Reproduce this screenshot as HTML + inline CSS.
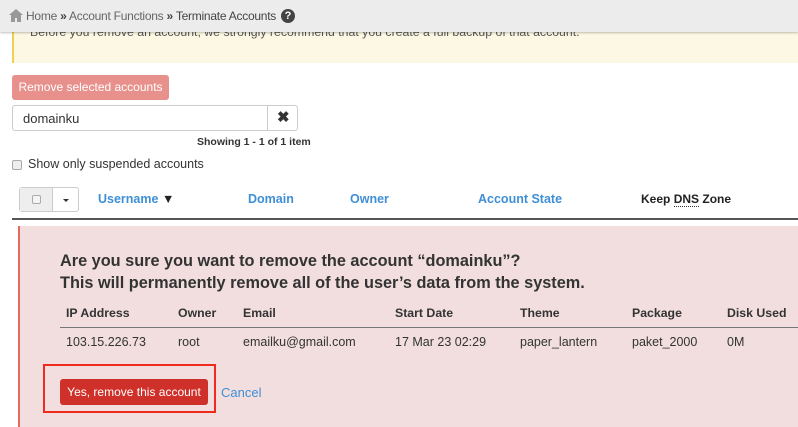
<!DOCTYPE html>
<html><head><style>
*{margin:0;padding:0;box-sizing:border-box}
body{width:798px;height:427px;overflow:hidden;background:#fff;font-family:"Liberation Sans",sans-serif;color:#333;position:relative;font-size:13px}
.a{position:absolute;white-space:nowrap}
.hdr{left:0;top:0;width:798px;height:32px;background:#ececec;box-shadow:0 1px 2px rgba(0,0,0,.25);z-index:2}
.blue{color:#3f8fd6;font-weight:bold;font-size:12.5px}
.th{font-weight:bold;font-size:12.3px}
</style></head><body>
<div class="a hdr">
<svg class="a" style="left:9px;top:9px" width="14" height="13" viewBox="0 0 14 13"><path d="M7 0L0 6h2v7h4V9h2v4h4V6h2z" fill="#999"/></svg>
<div class="a" style="left:26px;top:9px;font-size:12px;letter-spacing:-0.25px;color:#666">Home <b style="color:#444">»</b> Account Functions <b style="color:#444">»</b> <span style="color:#444">Terminate Accounts</span></div>
<div class="a" style="left:281px;top:9px;width:14px;height:14px;border-radius:7px;background:#444;color:#fff;font-size:11px;font-weight:bold;text-align:center;line-height:14px">?</div>
</div>
<div class="a" style="left:12px;top:28px;width:786px;height:35px;background:#fcf8e3;border-left:2px solid #f0d050"></div>
<div class="a" style="left:30px;top:25px;font-size:12.3px;color:#555">Before you remove an account, we strongly recommend that you create a full backup of that account.</div>
<div class="a" style="left:12px;top:75px;width:157px;height:25px;background:#e8908c;border-radius:3px;color:#fff;font-size:12px;line-height:25px;text-align:center">Remove selected accounts</div>
<div class="a" style="left:12px;top:105px;width:286px;height:26px;border:1px solid #ccc;border-radius:3px"></div>
<div class="a" style="left:267px;top:106px;width:1px;height:24px;background:#ccc"></div>
<div class="a" style="left:23px;top:111px;font-size:13px">domainku</div>
<div class="a" style="left:277px;top:108px;font-size:15px;font-weight:bold">✖</div>
<div class="a" style="left:197px;top:136px;font-size:10.5px;font-weight:bold">Showing 1 - 1 of 1 item</div>
<div class="a" style="left:12px;top:160px;width:10px;height:10px;border:1px solid #aaa;border-radius:2px;background:#eee"></div>
<div class="a" style="left:28px;top:157px;font-size:12.5px">Show only suspended accounts</div>
<div class="a" style="left:19px;top:187px;width:60px;height:25px;border:1px solid #ccc;border-radius:3px;background:#fff"></div>
<div class="a" style="left:20px;top:188px;width:33px;height:23px;background:#eee;border-right:1px solid #ccc"></div>
<div class="a" style="left:32px;top:195px;width:9px;height:9px;border:1px solid #aaa;border-radius:2px;background:#f5f5f5"></div>
<div class="a" style="left:63px;top:199px;border-left:3px solid transparent;border-right:3px solid transparent;border-top:3px solid #333"></div>
<div class="a blue" style="left:98px;top:192px">Username <span style="color:#222">▼</span></div>
<div class="a blue" style="left:248px;top:192px">Domain</div>
<div class="a blue" style="left:350px;top:192px">Owner</div>
<div class="a blue" style="left:478px;top:192px">Account State</div>
<div class="a" style="left:641px;top:192px;font-weight:bold;font-size:12px;color:#222">Keep <span style="border-bottom:1px dotted #333">DNS</span> Zone</div>
<div class="a" style="left:12px;top:218px;width:786px;height:2px;background:#555"></div>
<div class="a" style="left:18px;top:226px;width:780px;height:201px;background:#f2dede;border-left:2px solid #e8675f"></div>
<div class="a" style="left:60px;top:250px;font-size:16.3px;font-weight:bold;line-height:22px;color:#333">Are you sure you want to remove the account “domainku”?<br>This will permanently remove all of the user’s data from the system.</div>
<div class="a" style="left:60px;top:327px;width:738px;height:1px;background:#777"></div>
<div class="a th" style="left:66px;top:306px">IP Address</div>
<div class="a th" style="left:178px;top:306px">Owner</div>
<div class="a th" style="left:243px;top:306px">Email</div>
<div class="a th" style="left:395px;top:306px">Start Date</div>
<div class="a th" style="left:520px;top:306px">Theme</div>
<div class="a th" style="left:632px;top:306px">Package</div>
<div class="a th" style="left:727px;top:306px">Disk Used</div>
<div class="a" style="left:66px;top:335px;font-size:12.5px">103.15.226.73</div>
<div class="a" style="left:178px;top:335px;font-size:12.5px">root</div>
<div class="a" style="left:243px;top:335px;font-size:12.5px">emailku@gmail.com</div>
<div class="a" style="left:395px;top:335px;font-size:12.5px">17 Mar 23 02:29</div>
<div class="a" style="left:520px;top:335px;font-size:12.5px">paper_lantern</div>
<div class="a" style="left:632px;top:335px;font-size:12.5px">paket_2000</div>
<div class="a" style="left:727px;top:335px;font-size:12.5px">0M</div>
<div class="a" style="left:43px;top:364px;width:173px;height:49px;border:2px solid #f02a1e"></div>
<div class="a" style="left:60px;top:379px;width:148px;height:26px;background:#d0302a;border-radius:3px;color:#fff;font-size:12px;line-height:26px;text-align:center">Yes, remove this account</div>
<div class="a" style="left:221px;top:385px;color:#3f8fd6">Cancel</div>
</body></html>
